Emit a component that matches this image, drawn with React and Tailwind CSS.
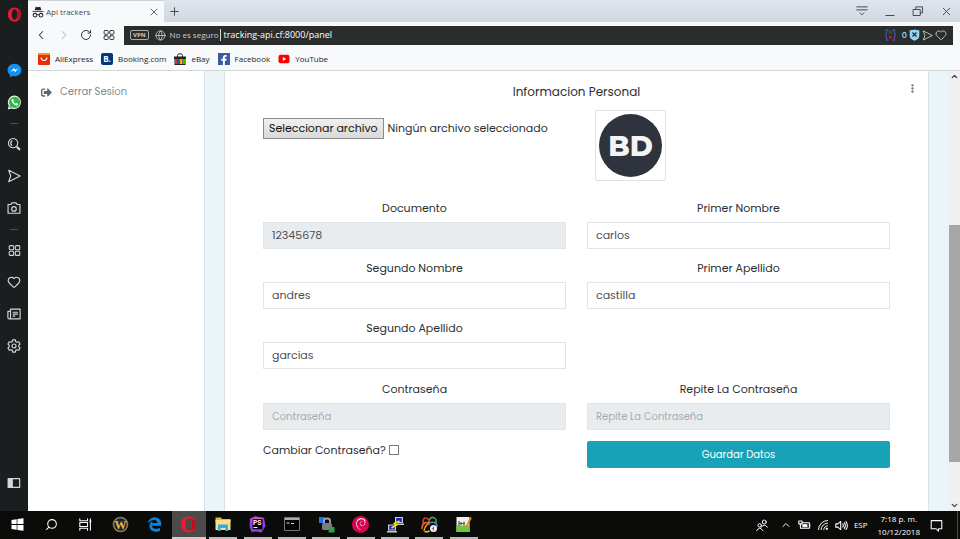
import React from "react";
import {
  ChevronLeft, ChevronRight, ChevronUp, ChevronDown, RotateCw, Globe, Heart,
  Plus, X, EllipsisVertical, Search,
} from "lucide-react";
import { FaSignOutAlt, FaEdgeLegacy, FaFacebookF } from "react-icons/fa";
import { SiDebian } from "react-icons/si";

const UI = "font-['Segoe_UI','Open_Sans','Noto_Sans',sans-serif]";
const PAGE = "font-[Poppins,Inter,sans-serif]";

function Line({ children, size = 14, className = "", box = 16, w = 1.3 }) {
  return (
    <svg width={size} height={size} viewBox={`0 0 ${box} ${box}`} fill="none" stroke="currentColor"
      strokeWidth={w} strokeLinejoin="round" strokeLinecap="round" className={className} aria-hidden="true">
      {children}
    </svg>
  );
}

function OperaLogo({ size = 15 }) {
  return (
    <svg width={size} height={size} viewBox="0 0 16 16" aria-hidden="true">
      <path fillRule="evenodd" fill="#f01a30" d="M8 .5C3.900.5 1 3.700 1 8s2.900 7.500 7 7.500S15 12.300 15 8 12.100.5 8 .5zM8 2.300c1.900 0 3 2.500 3 5.700s-1.100 5.700-3 5.700S5 11.200 5 8s1.100-5.700 3-5.700z" />
      <path fill="#b81020" d="M9 2.300C12 3.300 12.600 12.300 9 13.700c3.500-.2 6-2.400 6-5.700S12.500 2.500 9 2.300z" />
    </svg>
  );
}

const Tiles = ({ size }) => (
  <Line size={size}>
    <rect x="1.500" y="2" width="5.500" height="5" rx="1.200" />
    <rect x="9" y="2" width="5.500" height="5" rx="1.200" />
    <rect x="1.500" y="9" width="5.500" height="5" rx="1.200" />
    <rect x="9" y="9" width="5.500" height="5" rx="1.200" />
  </Line>
);
const Plane = ({ size }) => (
  <Line size={size}><path d="M2 1.500 15 8 2 14.500 4.200 8z" /></Line>
);

function SideButton({ label, children }) {
  return (
    <button type="button" aria-label={label} className="flex h-8 w-7 items-center justify-center">
      {children}
    </button>
  );
}

function Dash() {
  return <div className="flex h-2.5 items-center"><span className="h-px w-2 bg-[#4b4f50]" /></div>;
}

function OperaSidebar() {
  return (
    <nav aria-label="Opera" className="flex w-7 shrink-0 flex-col items-center bg-[#1a1e1f] text-[#d5d8d8]">
      <button type="button" aria-label="Opera" className="mb-[26px] flex h-7 w-7 items-center justify-center"><OperaLogo /></button>
      <SideButton label="Messenger">
        <svg width="15" height="15" viewBox="0 0 16 16" aria-hidden="true">
          <path fill="#1292f5" d="M8 .7C3.800.7.6 3.700.6 7.500c0 2.100 1 3.900 2.600 5.200v2.600l2.500-1.400c.7.200 1.500.3 2.300.3 4.200 0 7.400-3 7.400-6.700S12.200.7 8 .7z" />
          <path fill="#fff" d="m3.500 9.500 3.800-4 1.900 1.900 3.300-1.900-3.700 4L6.900 7.600z" />
        </svg>
      </SideButton>
      <SideButton label="WhatsApp">
        <svg width="15" height="15" viewBox="0 0 16 16" aria-hidden="true">
          <path fill="#f2f5f2" d="M8.200.6a7.200 7.200 0 0 0-6.300 10.800L.8 15.400l4-1A7.200 7.200 0 1 0 8.200.6z" />
          <path fill="#34b84a" d="M8.200 1.800a6 6 0 0 0-5.100 9.300l-.7 2.600 2.700-.7A6 6 0 1 0 8.200 1.800z" />
          <path fill="#fff" d="M5.700 4.300c-.7.5-1 1.300-.7 2.200.7 2.200 2.500 3.900 4.700 4.600 1 .2 1.800-.2 2-1.100l.1-.7-1.700-.9-.9.9C8 8.800 7.200 8 6.700 7l.6-.8-.6-1.700z" />
        </svg>
      </SideButton>
      <Dash />
      <SideButton label="Buscar">
        <Line><circle cx="7" cy="7" r="5.300" /><path d="M5.500 4.300a4 4 0 0 0 0 5.400" /><path strokeWidth="2.800" d="m12 12 2 2" /></Line>
      </SideButton>
      <SideButton label="Mi Flow"><Plane size={14} /></SideButton>
      <SideButton label="Instantánea">
        <Line><path d="M1.200 4h3.300l1-1.800h5l1 1.800h3.300v10H1.200z" /><circle cx="8" cy="9" r="2.600" /></Line>
      </SideButton>
      <Dash />
      <SideButton label="Acceso rápido"><Tiles size={13} /></SideButton>
      <SideButton label="Marcadores"><Heart size={14} strokeWidth={2} /></SideButton>
      <SideButton label="Noticias">
        <Line><path d="M4 2.500h11v11H2.500A1.500 1.500 0 0 1 1 12V5h3m0-2.500v9.500a1.500 1.500 0 0 1-1.500 1.500M7 6h5M7 8.200h5M7 10.400h2" /></Line>
      </SideButton>
      <SideButton label="Configuración">
        <Line>
          <path d="M6.500 1h3l.5 2 1.500.8 2-.6 1.400 2.500L13.500 7v2l1.400 1.300-1.400 2.500-2-.6L10 13l-.5 2h-3L6 13l-1.500-.8-2 .6-1.400-2.500L2.500 9V7L1.100 5.700l1.400-2.500 2 .6L6 3z" />
          <circle cx="8" cy="8" r="2.300" />
        </Line>
      </SideButton>
      <div className="mt-auto mb-3">
        <SideButton label="Panel">
          <Line><rect x="1.500" y="3" width="13" height="10" /><path fill="currentColor" d="M1.500 3h4.500v10H1.500z" /></Line>
        </SideButton>
      </div>
    </nav>
  );
}

function TabBar() {
  return (
    <div className="flex h-[22px] items-stretch bg-linear-to-b from-[#dfe5ed] to-[#d2d8e0] text-[#44484c]">
      <div className="flex w-[136px] items-center border-t border-[#cdd2d8] bg-[#f8f9fb] pl-1">
        <svg width="12" height="12" viewBox="0 0 16 16" fill="#222" aria-hidden="true">
          <path d="M5 1 8 1.800 11 1l1.500 4.500h-9zM.5 6.500h15v1.300H.5z" />
          <path fillRule="evenodd" d="M4 9a3.200 3.200 0 1 0 3.200 3.400q.8-.5 1.600 0A3.200 3.200 0 1 0 12 9c-1.400 0-2.500.8-3 2H7C6.500 9.800 5.400 9 4 9zm0 1.500a1.800 1.800 0 1 1 0 3.600 1.800 1.800 0 0 1 0-3.600zm8 0a1.800 1.800 0 1 1 0 3.600 1.800 1.800 0 0 1 0-3.600z" />
        </svg>
        <span className="ml-0.5 flex-1 text-[8px]">Api trackers</span>
        <button type="button" aria-label="Cerrar pestaña" className="mr-1 flex"><X size={12} strokeWidth={1.600} /></button>
      </div>
      <button type="button" aria-label="Nueva pestaña" className="flex w-5 items-center justify-center"><Plus size={13} strokeWidth={1.800} /></button>
      <div className="ml-auto flex items-center">
        <button type="button" aria-label="Menú de pestañas" className="flex w-7 justify-center">
          <Line size={12}><path d="M1 2.500h14M1 6.500h14M5.500 10.500 8 13l2.500-2.500" /></Line>
        </button>
        <button type="button" aria-label="Minimizar" className="flex w-7 justify-center"><Line size={12}><path d="M2.500 14h11" /></Line></button>
        <button type="button" aria-label="Restaurar" className="flex w-7 justify-center">
          <Line size={12}><path d="M2 6h9v8H2zM5 6V2.500h9v8h-3" /></Line>
        </button>
        <button type="button" aria-label="Cerrar" className="flex w-7 justify-center"><X size={13} strokeWidth={1.700} /></button>
      </div>
    </div>
  );
}

function AddressRow() {
  return (
    <div className="flex h-[26px] items-center bg-[#f8f9fb] pr-[7px] text-[#303437]">
      <div className="grid w-24 shrink-0 grid-cols-4 justify-items-center pr-1 pl-0.5">
        <button type="button" aria-label="Atrás"><ChevronLeft size={14} strokeWidth={1.800} /></button>
        <button type="button" aria-label="Adelante" className="text-[#b5b9bc]"><ChevronRight size={14} strokeWidth={1.800} /></button>
        <button type="button" aria-label="Recargar"><RotateCw size={12} strokeWidth={2} /></button>
        <button type="button" aria-label="Acceso rápido"><Tiles size={12} /></button>
      </div>
      <div className="flex h-[19px] flex-1 items-center bg-[#2b2d2d] pl-1.5 text-[#c9cccc]">
        <span className="rounded-xs border border-[#a9acac] px-0.5 text-[6px] leading-[8px] font-bold">VPN</span>
        <Globe size={11} strokeWidth={1.800} className="ml-1.5" />
        <span className="ml-1 text-[8px] whitespace-nowrap">No es seguro</span>
        <span className="mx-0.5 h-3 w-px bg-[#d5d5d5]" />
        <input aria-label="Dirección" defaultValue="tracking-api.cf:8000/panel" className="min-w-0 flex-1 bg-transparent text-[9px] text-white outline-none" />
        <svg width="11" height="12" viewBox="0 0 11 12" aria-hidden="true">
          <path d="M3.500 1H1.500v3.500L.5 6l1 1.500V11h2M7.500 1h2v3.500l1 1.500-1 1.500V11h-2" fill="none" stroke="#4a4aa8" strokeWidth="1.300" />
          <path d="M3.500 1.500h4v3.500h-4z" fill="#1d5b2c" /><path d="M3.500 7h4l-2 3.500z" fill="#c81b22" />
        </svg>
        <span className="ml-1.5 text-[9px] font-semibold text-[#8fd8f8]">0</span>
        <svg width="11" height="12" viewBox="0 0 11 12" className="ml-0.5" aria-hidden="true">
          <path fill="#8fd8f8" d="M.7 1.300Q3 1.500 5.500.5q2.500 1 4.800.8V7q0 3-4.800 4.700Q.7 10 .7 7z" />
          <path stroke="#2b2d2d" strokeWidth="1.300" d="m3.500 3.500 4 4m0-4-4 4" />
        </svg>
        <span className="ml-0.5 flex"><Plane size={11} /></span>
        <Heart size={12} strokeWidth={1.800} className="mr-1.5 ml-0.5" />
      </div>
    </div>
  );
}

function Bookmark({ label, icon }) {
  return (
    <a href="#" className="flex items-center gap-[5px] text-[8px] text-[#1f2224]">
      {icon}
      {label}
    </a>
  );
}

function Bookmarks() {
  return (
    <div className="flex h-[23px] items-center gap-2 border-b border-[#d3d7da] bg-[#f8f9fb] pl-2.5">
      <Bookmark label="AliExpress" icon={
        <svg width="12" height="12" viewBox="0 0 12 12" aria-hidden="true">
          <rect width="12" height="12" rx="1" fill="#e62e04" /><path fill="#f7941d" d="M0 1q0-1 1-1h10q1 0 1 1v1H0z" />
          <path d="M3 4.500q.5 3 3 3t3-3" fill="none" stroke="#fff" strokeWidth="1.200" />
        </svg>} />
      <Bookmark label="Booking.com" icon={
        <span className="flex size-3 items-center justify-center rounded-xs bg-[#003580] text-[8px] font-bold text-white">B.</span>} />
      <Bookmark label="eBay" icon={
        <svg width="12" height="12" viewBox="0 0 12 12" aria-hidden="true">
          <path d="M3.500 4V2.500q0-1.800 2.500-1.800t2.500 1.800V4" fill="none" stroke="#222" />
          <path fill="#222" d="M0 3.500h12V6H0zM.5 6h11v6H.5z" /><path fill="#e53238" d="M1 6h2.500v5H1z" />
          <path fill="#0064d2" d="M3.500 6H6v5H3.500z" /><path fill="#f5af02" d="M6 6h2.500v5H6z" /><path fill="#5fa50a" d="M8.500 6H11v5H8.500z" />
        </svg>} />
      <Bookmark label="Facebook" icon={
        <span className="flex size-3 items-end justify-end bg-[#3b5ba5] pr-px text-white"><FaFacebookF size={10} /></span>} />
      <Bookmark label="YouTube" icon={
        <svg width="12" height="12" viewBox="0 0 12 12" aria-hidden="true">
          <rect x=".5" y="1.800" width="11" height="8.400" rx="2" fill="#f00" /><path fill="#fff" d="M4.800 4v4l3.400-2z" />
        </svg>} />
    </div>
  );
}

function Field({ id, label, ...props }) {
  return (
    <div className="flex flex-col">
      <label htmlFor={id} className="mb-[5px] text-center leading-[18px]">{label}</label>
      <input id={id} {...props}
        className="h-[27px] w-full border border-[#e2e5e8] bg-white px-2 text-[11px] text-[#495057] outline-none placeholder:text-[10px] placeholder:text-[#a6abb0] read-only:bg-[#e9ecef] disabled:bg-[#e9ecef]" />
    </div>
  );
}

function ProfileCard() {
  return (
    <main className="mr-5 ml-[19px] flex-1 border-x border-[#d9e2e8] bg-white px-[38px] pt-3 text-[11px] text-[#2b2f33]">
      <header className="relative">
        <h1 className="text-center text-[12px] leading-[18px]">Informacion Personal</h1>
        <button type="button" aria-label="Opciones" className="absolute top-0 -right-7 text-[#5d6368]"><EllipsisVertical size={11} strokeWidth={3} /></button>
      </header>
      <form onSubmit={(e) => e.preventDefault()}>
        <div className="mt-[9px] grid grid-cols-2 gap-x-[21px]">
          <div className="flex items-center gap-1 self-start pt-2">
            <input id="foto" type="file" className="sr-only" />
            <label htmlFor="foto" className="flex h-[21px] items-center border border-[#8b8b8b] bg-linear-to-b from-[#f0f0f0] to-[#d9d9d9] px-[5px] whitespace-nowrap text-[#111]">
              Seleccionar archivo
            </label>
            <span className="whitespace-nowrap">Ningún archivo seleccionado</span>
          </div>
          <div className="ml-2 size-[71px] rounded-xs border border-[#dfe2e5] p-[3px]">
            <div role="img" aria-label="Foto de perfil" className="flex size-full items-center justify-center rounded-full bg-[#2f333e] font-[Montserrat,Inter,sans-serif] text-[28px] font-extrabold text-[#f4f4f5]">BD</div>
          </div>
        </div>
        <div className="mt-[18px] grid grid-cols-2 gap-x-[21px] gap-y-2.5">
          <Field id="documento" label="Documento" defaultValue="12345678" readOnly />
          <Field id="nombre1" label="Primer Nombre" defaultValue="carlos" />
          <Field id="nombre2" label="Segundo Nombre" defaultValue="andres" />
          <Field id="apellido1" label="Primer Apellido" defaultValue="castilla" />
          <Field id="apellido2" label="Segundo Apellido" defaultValue="garcias" />
          <div />
        </div>
        <div className="mt-[11px] grid grid-cols-2 gap-x-[21px] gap-y-[11px]">
          <Field id="clave" label="Contraseña" type="password" placeholder="Contraseña" disabled />
          <Field id="clave2" label="Repite La Contraseña" type="password" placeholder="Repite La Contraseña" disabled />
          <div className="flex items-center gap-[3px] self-start">
            <label htmlFor="cambiar" className="leading-[18px]">Cambiar Contraseña?</label>
            <input id="cambiar" type="checkbox" className="size-2.5 appearance-none border border-[#777] bg-white checked:bg-[#18a2b8]" />
          </div>
          <button type="submit" className="h-[27px] rounded-xs bg-[#18a2b8] text-[10px] text-white">Guardar Datos</button>
        </div>
      </form>
    </main>
  );
}

function Scrollbar() {
  return (
    <div aria-hidden="true" className="flex w-[11px] shrink-0 flex-col items-center bg-[#f0f0f0] text-[#444]">
      <ChevronUp size={9} strokeWidth={3.500} className="my-px shrink-0" />
      <div className="grow-[143]" />
      <div className="w-full grow-[237] bg-[#a6a6a6]" />
      <div className="grow-[38]" />
      <ChevronDown size={9} strokeWidth={3.500} className="my-px shrink-0" />
    </div>
  );
}

function Task({ label, state, children }) {
  return (
    <button type="button" aria-label={label}
      className={state === "active" ? "flex flex-col items-center bg-[#4b4b4b]" : "flex flex-col items-center"}>
      <span className="flex flex-1 items-center">{children}</span>
      <span className={state === "active" ? "h-0.5 w-full bg-[#d8c9ca]" : state === "open" ? "h-0.5 w-7 bg-[#b9bbba]" : "h-0.5"} />
    </button>
  );
}

function Taskbar() {
  return (
    <footer className={`flex h-7 shrink-0 bg-[#0b0c0a] text-white ${UI}`}>
      <div className="grid w-[481px] shrink-0 grid-cols-[repeat(14,1fr)]">
        <Task label="Inicio">
          <svg width="13" height="13" viewBox="0 0 13 13" fill="#fff" aria-hidden="true">
            <path d="M.5 2 5.700 1.200v4.900H.5zM6.400 1.100 12.500.2v5.900H6.400zM.5 6.900h5.200v4.900L.5 11zM6.400 6.900h6.100v5.900l-6.100-.9z" />
          </svg>
        </Task>
        <Task label="Buscar"><Search size={13} strokeWidth={1.900} className="-scale-x-100" /></Task>
        <Task label="Vista de tareas">
          <Line size={13}><path d="M1 1v2.500h9.500V1M1 15v-2.500h9.500V15M1 5.500h9.500v5H1zM14 1v1.500M14 6v9" /><path d="M14 3.500v1.500" strokeWidth="2.200" /></Line>
        </Task>
        <Task label="Juego">
          <svg width="17" height="17" viewBox="0 0 17 17" aria-hidden="true">
            <circle cx="8.500" cy="8.500" r="7" fill="#14284a" stroke="#9a7a35" strokeWidth="1.600" />
            <text x="8.500" y="12.500" textAnchor="middle" fontSize="12" fontWeight="700" fontFamily="Liberation Serif, serif" fill="#f2b92c">W</text>
          </svg>
        </Task>
        <Task label="Edge"><FaEdgeLegacy size={15} color="#0c80e0" /></Task>
        <Task label="Opera" state="active"><OperaLogo size={17} /></Task>
        <Task label="Explorador" state="open">
          <svg width="16" height="14" viewBox="0 0 16 14" aria-hidden="true">
            <path fill="#e8b93c" d="M.5.5h5.500l1 1.500h8.500v3H.5z" /><path fill="#fbe08a" d="M.5 3h15v10H.5z" />
            <path fill="#35a7e8" d="M3 7.500h10V14h-2.500v-3h-5v3H3z" />
          </svg>
        </Task>
        <Task label="PhpStorm" state="open">
          <svg width="17" height="17" viewBox="0 0 17 17" aria-hidden="true">
            <path fill="#8a3ff0" d="M1 3 6 .5l9 1.500 1.500 8-4 6.500-5-1-5 .5L.5 10z" /><path fill="#e04bc4" d="m1 3 5-2.500L15 2 3 8z" />
            <path d="M3.500 3.200h10v10h-10z" />
            <text x="4" y="9" fontSize="6.500" fontWeight="700" fontFamily="Inter, sans-serif" fill="#fff">PS</text>
            <path fill="#fff" d="M4.500 11h4v1h-4z" />
          </svg>
        </Task>
        <Task label="Terminal" state="open">
          <svg width="16" height="14" viewBox="0 0 16 14" aria-hidden="true">
            <path fill="#050505" stroke="#777" d="M.5.5h15v13H.5z" /><path fill="#aaa" d="M1 1h14v2H1z" />
            <path stroke="#ddd" fill="none" d="M2.500 6h3M7 6.500h3" />
          </svg>
        </Task>
        <Task label="VPN" state="open">
          <svg width="17" height="17" viewBox="0 0 17 17" aria-hidden="true">
            <path fill="#1e74e6" d="M1 1h6v6H1z" /><path fill="none" stroke="#a5a5a5" strokeWidth="1.800" d="M6 8V4.500q0-2 3-2t3 2V8" />
            <rect x="4" y="7" width="10" height="7" rx="1.500" fill="#7b7e80" /><path fill="#27a844" d="M11.500 11h5v5.500h-6z" />
          </svg>
        </Task>
        <Task label="Debian" state="open">
          <span className="flex size-[17px] items-center justify-center rounded-full bg-[#d80650]"><SiDebian size={12} /></span>
        </Task>
        <Task label="PuTTY" state="open">
          <svg width="17" height="17" viewBox="0 0 17 17" aria-hidden="true">
            <path fill="#c8cbd0" d="M8 1h8v6H8zM1 8.500h8v6H1zM10 7.500h7v1.500h-7zM0 15h10v1.500H0z" />
            <path fill="#1426c4" d="M9.200 2h5.600v4H9.200zM2.200 9.500h5.600v4H2.200z" />
            <path fill="none" stroke="#f0e322" strokeWidth="1.700" d="m12.500 5-5 2.500 2 1.500-5 3" />
          </svg>
        </Task>
        <Task label="Navicat" state="open">
          <svg width="17" height="17" viewBox="0 0 17 17" fill="none" strokeWidth="1.500" aria-hidden="true">
            <path stroke="#e33c24" d="M3 9C0 2 6-1 8.500 5.500" /><path stroke="#f19a20" d="M8.500 5.500C6 9 4 9 3 15" />
            <path stroke="#4ba83b" d="M8 4C11-1 17 2 14.500 8" /><path stroke="#e0752a" d="M1 13C1 7 6 4 8.500 9" />
            <path stroke="#378bd8" d="M8.500 7c4-2 8 0 7.500 4" /><path stroke="#e9c63a" d="M3.500 15.500q2.500.8 5-.5" />
            <circle cx="12.500" cy="12.500" r="3.500" fill="#f2f2f2" stroke="none" /><path stroke="#d8574b" strokeWidth="1.200" d="M10.800 12.500h2" /><path stroke="#378bd8" strokeWidth="1.200" d="M12.500 10.500v4" />
          </svg>
        </Task>
        <Task label="Notepad++" state="open">
          <svg width="17" height="17" viewBox="0 0 17 17" aria-hidden="true">
            <path fill="#eef3ea" d="M1.500 1h13v15h-13z" /><path fill="#72c63b" d="M1.500 9.500h13V16h-13z" />
            <path stroke="#566052" fill="none" strokeWidth="1.200" d="M4 5v5M4 7.500h6M6 6v3M9 5.500v4" />
            <path stroke="#e78b20" strokeWidth="1.800" d="m16 1.500-5 10" />
          </svg>
        </Task>
      </div>
      <div className="ml-auto flex items-center">
        <Line size={12} className="mr-3"><circle cx="11" cy="4" r="2.600" /><path d="M7 11q4-6 8.200 0" /><circle cx="5" cy="8.500" r="2.300" /><path d="M1 15.500q4-7 8 0" /></Line>
        <ChevronUp size={12} strokeWidth={1.900} className="mr-1.5" />
        <Line size={13} className="mr-1.5"><path d="M6 4.500h8v7H4M14.500 6.500v3M1 2.500h4v3.500H1zM3 6v5.500" /><path fill="currentColor" d="M6 7h5v2.500H6z" /></Line>
        <Line size={12} className="mr-1.5"><path d="M2 14A12 12 0 0 1 14 2M5.500 14A8.500 8.500 0 0 1 14 5.500M9 14a5 5 0 0 1 5-5" /><circle cx="13" cy="13" r="1" fill="currentColor" /></Line>
        <Line size={13} className="mr-1.5"><path d="M1 6h2.500L7 3v10L3.500 10H1zM9.500 6q1.500 2 0 4M11.500 4.500q2.500 3.500 0 7M13.500 3q3.500 5 0 10" /></Line>
        <span className="mr-2.5 text-[8px]">ESP</span>
        <time className="mr-2.5 text-center text-[8px] leading-[13px]" dateTime="2018-12-10T19:18">7:18 p. m.<br />10/12/2018</time>
        <Line size={13} className="mr-3.5"><path d="M1.500 2h13v10h-4v3l-3-3h-6z" /></Line>
        <span className="h-full w-px bg-[#4a4a4a]" />
        <span className="w-0.5" />
      </div>
    </footer>
  );
}

export default function App() {
  return (
    <div className="flex h-screen flex-col overflow-hidden bg-white">
      <div className="flex min-h-0 flex-1">
        <OperaSidebar />
        <div className="flex min-w-0 flex-1 flex-col">
          <div className={UI}>
            <TabBar />
            <AddressRow />
            <Bookmarks />
          </div>
          <div className={`flex min-h-0 flex-1 bg-[#ebf4f8] ${PAGE}`}>
            <aside className="w-[177px] shrink-0 border-r border-[#d9e2e8] bg-white pt-3 pl-[13px]">
              <a href="#" className="flex items-center gap-2 text-[10px] leading-[18px] text-[#84898e]">
                <FaSignOutAlt size={11} color="#5d6675" />
                Cerrar Sesíon
              </a>
            </aside>
            <ProfileCard />
            <Scrollbar />
          </div>
        </div>
      </div>
      <Taskbar />
    </div>
  );
}
